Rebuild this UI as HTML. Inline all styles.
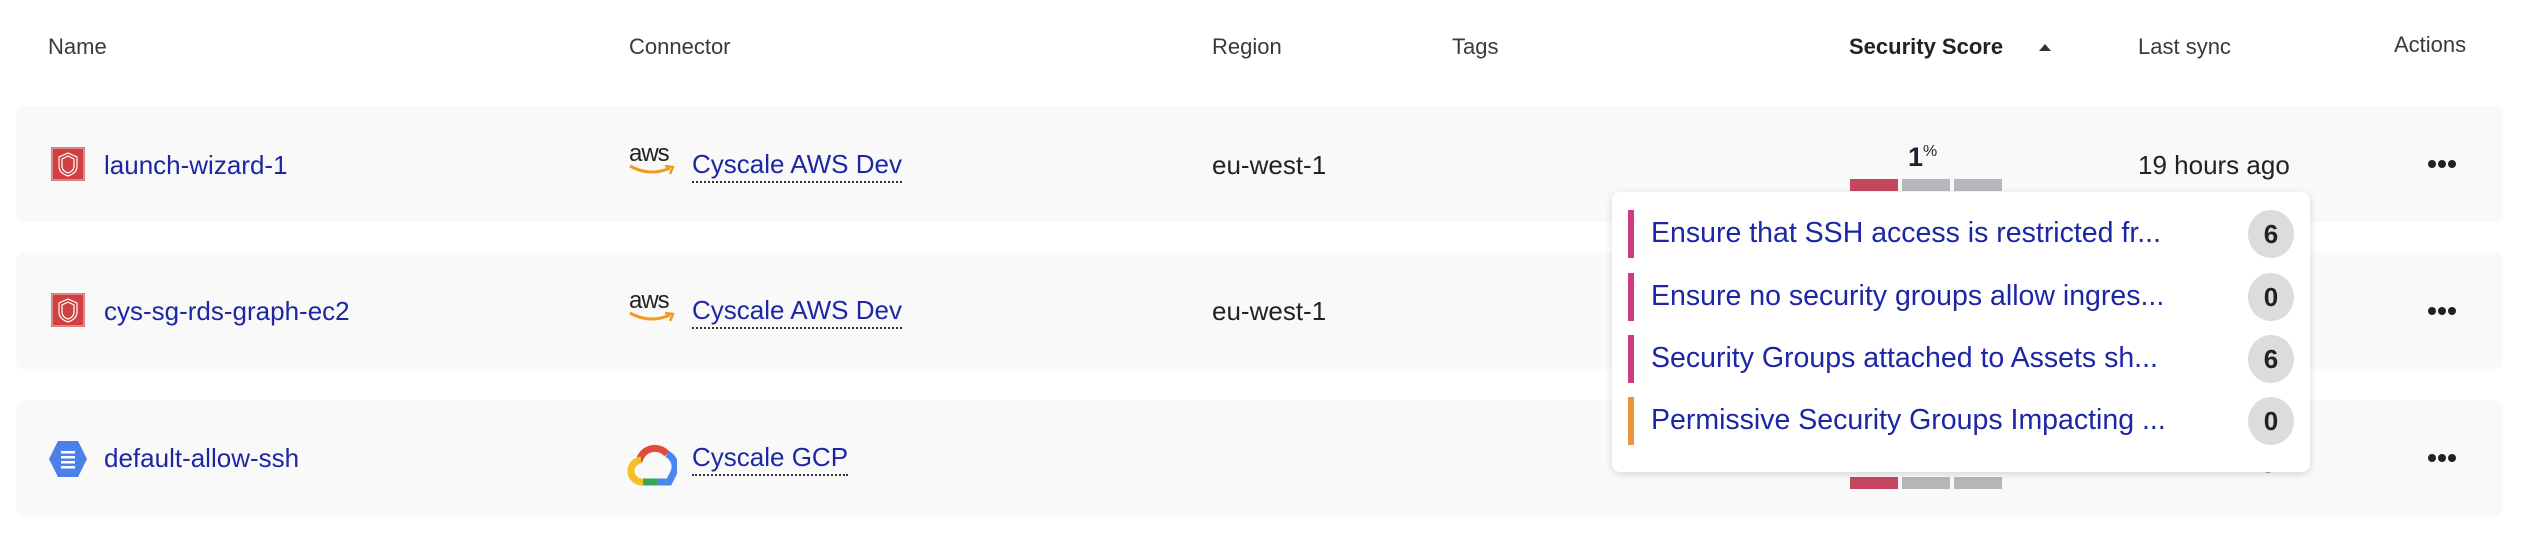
<!DOCTYPE html>
<html><head><meta charset="utf-8"><style>
*{margin:0;padding:0;box-sizing:border-box}
body{width:2528px;height:536px;background:#fff;font-family:"Liberation Sans",sans-serif;position:relative;overflow:hidden;color:#222}
.a{position:absolute;white-space:nowrap}
.h{font-size:22px;color:#3a3a3a;top:34px}
.row{position:absolute;left:16px;width:2487px;background:#f9f9f9;border-radius:8px}
.t{font-size:26px;line-height:30px}
.lnk{color:#1c27a5}
.dot{border-bottom:2px dotted #333;padding-bottom:2px}
.bar{position:absolute;height:12px;width:48px}
.pop{position:absolute;left:1612px;top:192px;width:698px;height:280px;background:#fff;border-radius:8px;box-shadow:0 2px 8px rgba(0,0,0,.15)}
.it{position:absolute;left:16px;width:680px;height:48px}
.it .b{position:absolute;left:0;top:0;width:6px;height:48px}
.it .x{position:absolute;left:23px;top:7px;font-size:28.5px;color:#1c27a5}
.it .c{position:absolute;left:620px;top:0;width:46px;height:48px;border-radius:50%;background:#dcdcdc;font-size:26px;font-weight:bold;color:#222;text-align:center;line-height:48px}
.dots{position:absolute;width:30px;height:8px}
.dots i{position:absolute;top:0;width:8px;height:8px;border-radius:50%;background:#222}
.aws{font-size:24px;color:#222;letter-spacing:-1px}
</style></head><body>
<div class="a h" style="left:48px">Name</div>
<div class="a h" style="left:629px">Connector</div>
<div class="a h" style="left:1212px">Region</div>
<div class="a h" style="left:1452px">Tags</div>
<div class="a h" style="left:1849px;font-weight:bold;color:#222">Security Score</div>
<svg class="a" style="left:2038px;top:42px" width="14" height="10"><path d="M1 9 L7 2 L13 9Z" fill="#333"/></svg>
<div class="a h" style="left:2138px">Last sync</div>
<div class="a h" style="left:2394px;top:32px">Actions</div>

<div class="row" style="top:106px;height:116px"></div>
<div class="row" style="top:253px;height:116px"></div>
<div class="row" style="top:400px;height:116px"></div>

<svg class="a" style="left:51px;top:147px" width="34" height="34"><rect width="34" height="34" fill="#c63535"/><rect x="1" y="1" width="32" height="32" fill="#d04040" stroke="#f0d0d0" stroke-width="1"/><path d="M17 6 L26 10 L26 19 Q26 26 17 29 Q8 26 8 19 L8 10Z M17 9 L23 12 L23 19 Q23 24 17 26 Q11 24 11 19 L11 12Z" fill="none" stroke="#fff" stroke-width="1.2"/></svg>
<svg class="a" style="left:51px;top:293px" width="34" height="34"><rect width="34" height="34" fill="#c63535"/><rect x="1" y="1" width="32" height="32" fill="#d04040" stroke="#f0d0d0" stroke-width="1"/><path d="M17 6 L26 10 L26 19 Q26 26 17 29 Q8 26 8 19 L8 10Z M17 9 L23 12 L23 19 Q23 24 17 26 Q11 24 11 19 L11 12Z" fill="none" stroke="#fff" stroke-width="1.2"/></svg>
<svg class="a" style="left:48px;top:440px" width="40" height="38"><path d="M10 1 L30 1 L39 19 L30 37 L10 37 L1 19Z" fill="#4a80e8"/><g fill="#fff"><rect x="13" y="11" width="14" height="2.5"/><rect x="13" y="16" width="14" height="2.5"/><rect x="13" y="21" width="14" height="2.5"/><rect x="13" y="26" width="14" height="2.5"/></g></svg>

<div class="a t lnk" style="left:104px;top:150px">launch-wizard-1</div>
<div class="a t lnk" style="left:104px;top:296px">cys-sg-rds-graph-ec2</div>
<div class="a t lnk" style="left:104px;top:443px">default-allow-ssh</div>

<div class="a aws" style="left:629px;top:140px">aws</div>
<svg class="a" style="left:628px;top:163px" width="48" height="14"><path d="M2 3 Q22 14 42 5" fill="none" stroke="#f29a1f" stroke-width="3"/><path d="M37 3 L45 4 L42 11" fill="none" stroke="#f29a1f" stroke-width="2.5"/></svg>
<div class="a aws" style="left:629px;top:287px">aws</div>
<svg class="a" style="left:628px;top:310px" width="48" height="14"><path d="M2 3 Q22 14 42 5" fill="none" stroke="#f29a1f" stroke-width="3"/><path d="M37 3 L45 4 L42 11" fill="none" stroke="#f29a1f" stroke-width="2.5"/></svg>
<svg class="a" style="left:627px;top:440px" width="50" height="46"><path d="M12 22 A16 16 0 0 1 40 14" fill="none" stroke="#e04b3b" stroke-width="7"/><path d="M40 14 A14 14 0 0 1 46 34 L42 42 L30 42" fill="none" stroke="#4a86f0" stroke-width="7"/><path d="M30 42 L16 42" stroke="#3aa655" stroke-width="7"/><path d="M16 42 A11 11 0 0 1 14 20" fill="none" stroke="#f6c025" stroke-width="7"/></svg>

<div class="a t lnk dot" style="left:692px;top:149px">Cyscale AWS Dev</div>
<div class="a t lnk dot" style="left:692px;top:295px">Cyscale AWS Dev</div>
<div class="a t lnk dot" style="left:692px;top:442px">Cyscale GCP</div>

<div class="a t" style="left:1212px;top:150px;color:#222">eu-west-1</div>
<div class="a t" style="left:1212px;top:296px;color:#222">eu-west-1</div>

<div class="a" style="left:1908px;top:142px;font-size:27px;font-weight:bold;color:#1d2333">1<span style="font-size:16px;font-weight:normal;vertical-align:10px">%</span></div>
<div class="bar" style="left:1850px;top:179px;background:#c4475f"></div>
<div class="bar" style="left:1902px;top:179px;background:#b6b7bb"></div>
<div class="bar" style="left:1954px;top:179px;background:#b6b7bb"></div>
<div class="bar" style="left:1850px;top:477px;background:#c4475f"></div>
<div class="bar" style="left:1902px;top:477px;background:#b6b7bb"></div>
<div class="bar" style="left:1954px;top:477px;background:#b6b7bb"></div>

<div class="a t" style="left:2138px;top:150px;color:#222">19 hours ago</div>
<div class="a t" style="left:2138px;top:443px;color:#222">19 hours ago</div>

<div class="dots" style="left:2428px;top:160px"><i style="left:0"></i><i style="left:10px"></i><i style="left:20px"></i></div>
<div class="dots" style="left:2428px;top:307px"><i style="left:0"></i><i style="left:10px"></i><i style="left:20px"></i></div>
<div class="dots" style="left:2428px;top:454px"><i style="left:0"></i><i style="left:10px"></i><i style="left:20px"></i></div>

<div class="pop">
 <div class="it" style="top:18px"><div class="b" style="background:#cc3c7f"></div><div class="x">Ensure that SSH access is restricted fr...</div><div class="c">6</div></div>
 <div class="it" style="top:81px"><div class="b" style="background:#cc3c7f"></div><div class="x">Ensure no security groups allow ingres...</div><div class="c">0</div></div>
 <div class="it" style="top:143px"><div class="b" style="background:#cc3c7f"></div><div class="x">Security Groups attached to Assets sh...</div><div class="c">6</div></div>
 <div class="it" style="top:205px"><div class="b" style="background:#e8953e"></div><div class="x">Permissive Security Groups Impacting ...</div><div class="c">0</div></div>
</div>
</body></html>
